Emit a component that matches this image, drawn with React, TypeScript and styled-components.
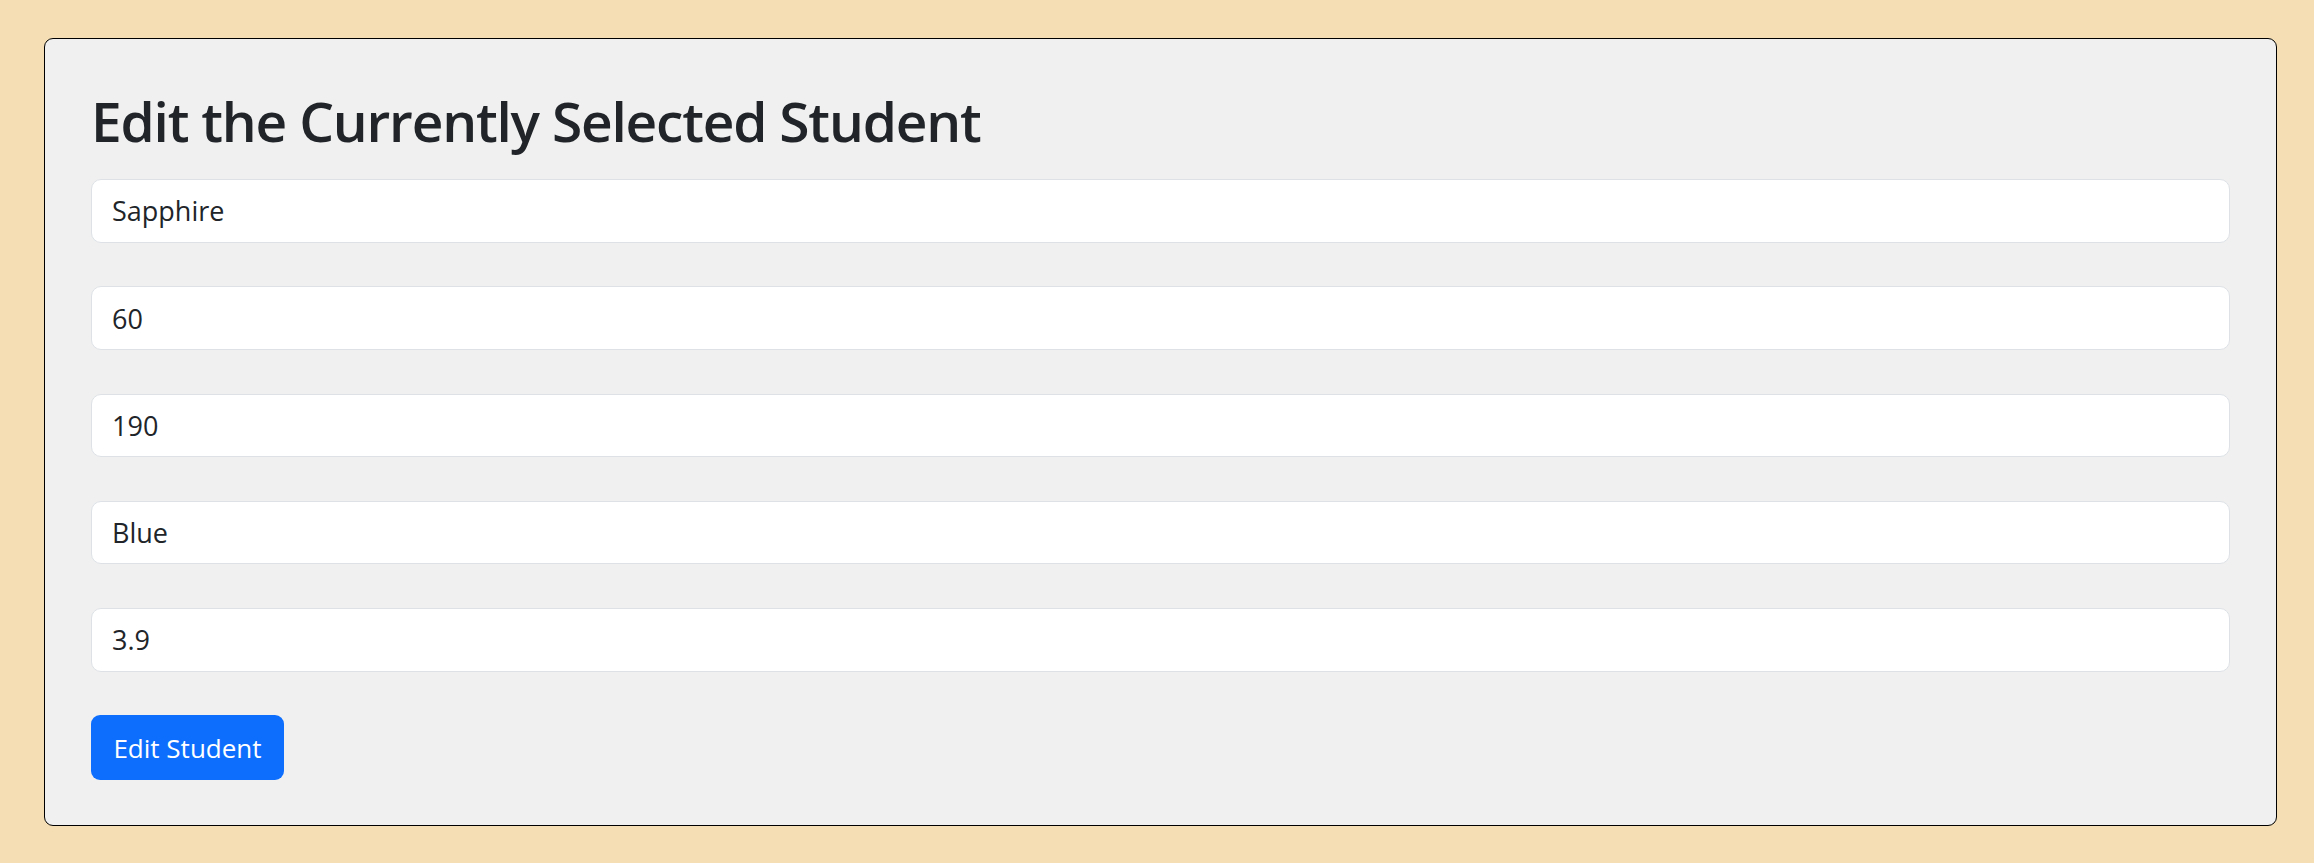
import React from "react";
import styled, { createGlobalStyle } from "styled-components";

const Global = createGlobalStyle`
  html, body { margin: 0; padding: 0; background: #f5deb3; }
  body { font-family: "Open Sans", "Noto Sans", sans-serif; color: #212529; }
  * { box-sizing: border-box; }
`;

const Page = styled.div`
  padding: 38px 37px 38px 44px;
`;

const Card = styled.section`
  background: #f0f0f0;
  border: 1.5px solid #000;
  border-radius: 9px;
  padding: 46px 46px 45px 46px;
`;

const Title = styled.h1`
  margin: 0 0 22px 0;
  font-size: 55px;
  font-weight: 600;
  line-height: 72px;
  color: #212529;
  letter-spacing: -1.2px;
`;

const Form = styled.form`
  display: flex;
  flex-direction: column;
  align-items: stretch;
  gap: 43.8px;
`;

const Field = styled.input`
  display: block;
  width: 100%;
  height: 63.5px;
  padding: 0 20px;
  font-family: inherit;
  font-size: 27px;
  color: #212529;
  background: #fff;
  border: 1.5px solid #dee2e6;
  border-radius: 10px;
  outline: none;
`;

const Button = styled.button`
  align-self: flex-start;
  width: 193px;
  height: 65px;
  padding: 0;
  font-family: inherit;
  font-size: 26px;
  color: #fff;
  background: #0d6efd;
  border: none;
  border-radius: 9px;
  cursor: pointer;
`;

const values = ["Sapphire", "60", "190", "Blue", "3.9"];

export default function App() {
  return (
    <>
      <Global />
      <Page>
        <Card>
          <Title>Edit the Currently Selected Student</Title>
          <Form onSubmit={(e) => e.preventDefault()}>
            {values.map((v, i) => (
              <Field key={i} defaultValue={v} />
            ))}
            <Button type="submit">Edit Student</Button>
          </Form>
        </Card>
      </Page>
    </>
  );
}
